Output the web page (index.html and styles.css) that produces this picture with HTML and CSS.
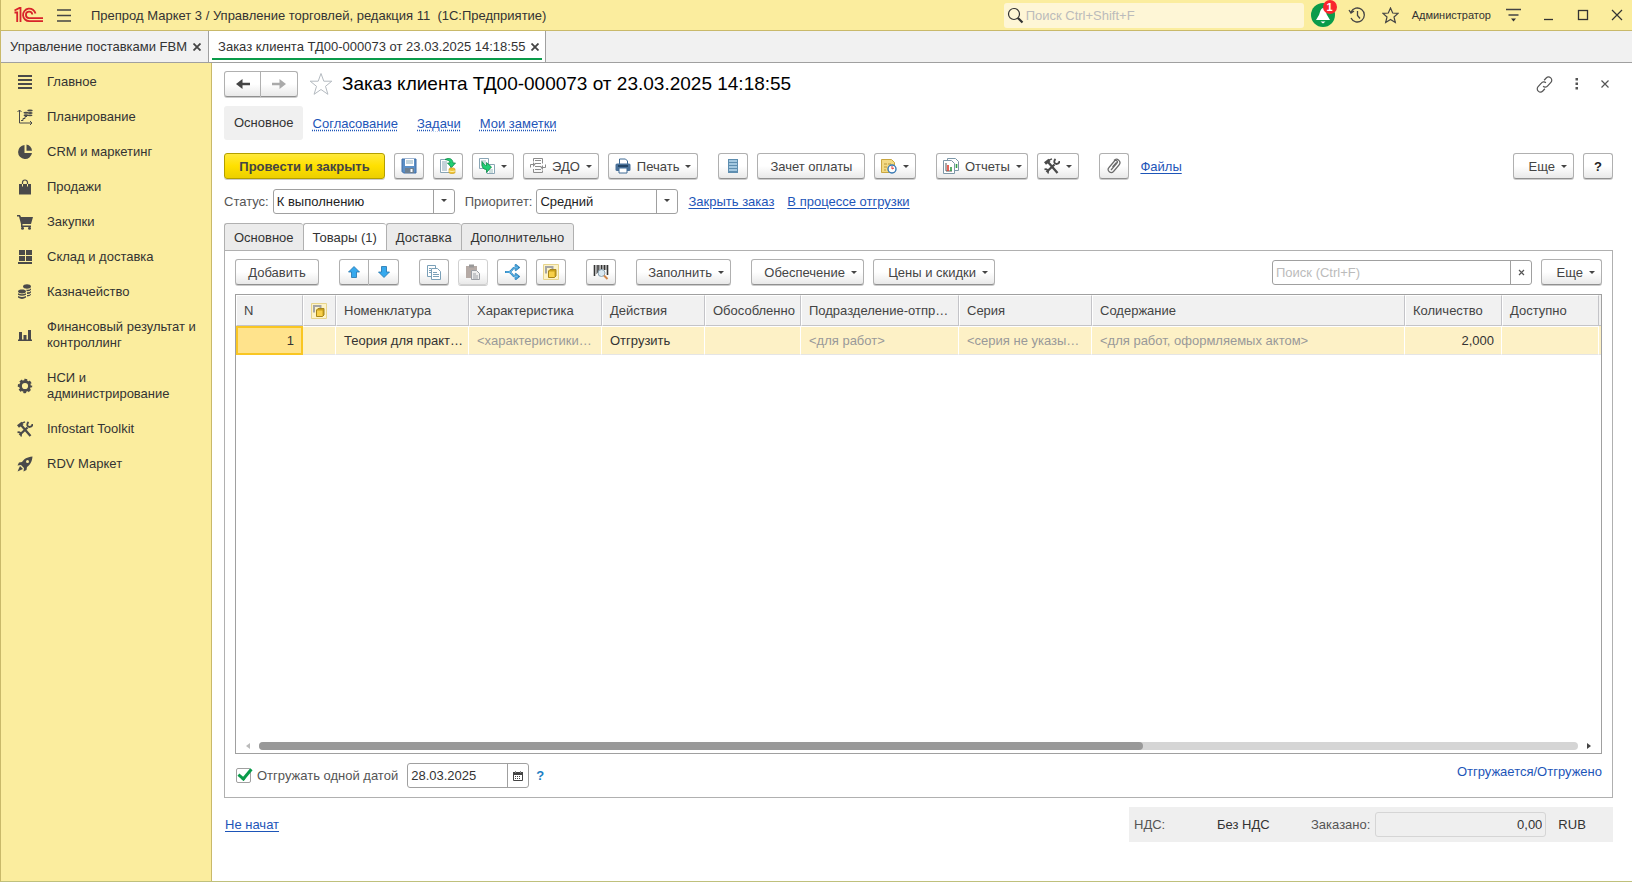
FILE: index.html
```html
<!DOCTYPE html>
<html lang="ru">

<head>
    <meta charset="UTF-8">
    <meta name="viewport" content="width=device-width, initial-scale=1.0">
    <title>Заказ клиента ТД00-000073</title>
    <link rel="stylesheet" href="styles.css">
</head>

<body>

    <header class="topbar">
        <svg class="logo" width="29" height="16" viewBox="0 0 29 16" fill="none" stroke="#d8232a" stroke-width="1.800">
            <path d="M.5 5.500H3.200V15M.5 3.500L5.500 1H6.500V15" />
            <path d="M21.500 6.500a6.300 6.300 0 1 0-6.200 7.700H29" />
            <path d="M18.300 7.500a3.200 3.200 0 1 0-3 3.600H29" />
        </svg>
        <button class="bare menu-button" aria-label="Меню">
            <svg width="14" height="14" viewBox="0 0 14 14" stroke="#444" stroke-width="1.300"><path d="M0 2h14M0 7.500h14M0 13h14" /></svg>
        </button>
        <span class="app-title">Препрод Маркет 3 / Управление торговлей, редакция 11&nbsp; (1С:Предприятие)</span>
        <label class="global-search">
            <svg width="17" height="17" viewBox="0 0 17 17" fill="none" stroke="#333"><circle cx="7" cy="7" r="5.500" stroke-width="1.200" /><path d="M11 11l4.500 4.500" stroke-width="2.200" /></svg>
            <input type="text" placeholder="Поиск Ctrl+Shift+F">
        </label>
        <button class="bare bell" aria-label="Оповещения">
            <svg width="24" height="24" viewBox="0 0 24 24"><circle cx="12" cy="12" r="12" fill="#0a9b4a" /><path d="M12 5c-3 1-3 5-4 7l-3 5h14l-3-5c-1-2-1-6-4-7zM9.500 18.500h5l-2.500 2z" fill="#fff" /></svg>
            <span class="badge">1</span>
        </button>
        <button class="bare history" aria-label="История">
            <svg width="18" height="18" viewBox="0 0 18 18" fill="none" stroke="#444" stroke-width="1.300"><path d="M3 6a7 7 0 1 1 0 6M1 4l2 3 3-2M9.500 5v4.500l2.500 3" /></svg>
        </button>
        <button class="bare favorites" aria-label="Избранное">
            <svg width="17" height="17" viewBox="0 0 17 17" fill="none" stroke="#444" stroke-width="1.200"><path d="M8.500 1l2.200 5 5.300.4-4 3.600 1.300 5.500-4.800-3-4.800 3L5 10 1 6.400l5.300-.4z" /></svg>
        </button>
        <span class="user">Администратор</span>
        <button class="bare service" aria-label="Сервис">
            <svg width="15" height="14" viewBox="0 0 15 14" fill="none" stroke="#444" stroke-width="1.300"><path d="M0 1.500h15M2.500 7h10" /><path d="M5 10.500h5l-2.500 3z" fill="#333" stroke="none" /></svg>
        </button>
        <button class="bare win" aria-label="Свернуть">
            <svg width="12" height="12" viewBox="0 0 12 12" stroke="#333"><path d="M1 10.500h9" stroke-width="1.300" /></svg>
        </button>
        <button class="bare win" aria-label="Развернуть">
            <svg width="12" height="12" viewBox="0 0 12 12" fill="none" stroke="#333"><rect x="1.500" y="1.500" width="9" height="9" stroke-width="1.300" /></svg>
        </button>
        <button class="bare win" aria-label="Закрыть">
            <svg width="12" height="12" viewBox="0 0 12 12" stroke="#333"><path d="M1 1l10 10M11 1L1 11" stroke-width="1.200" /></svg>
        </button>
    </header>

    <nav class="window-tabs">
        <div class="window-tab">Управление поставками FBM <button class="bare close" aria-label="Закрыть вкладку"><svg width="8" height="8" viewBox="0 0 8 8" stroke="#444" stroke-width="1.800"><path d="M.5 .5l7 7M7.500 .5l-7 7" /></svg></button></div>
        <div class="window-tab active">Заказ клиента ТД00-000073 от 23.03.2025 14:18:55 <button class="bare close" aria-label="Закрыть вкладку"><svg width="8" height="8" viewBox="0 0 8 8" stroke="#444" stroke-width="1.800"><path d="M.5 .5l7 7M7.500 .5l-7 7" /></svg></button></div>
    </nav>

    <div class="workspace">
        <nav class="sidebar">
            <a href="#"><svg width="16" height="16" viewBox="0 0 16 16" fill="#4a4a4a"><path d="M1 1h14v2H1zM1 5h14v2H1zM1 9h14v2H1zM1 13h14v2H1z" /></svg>Главное</a>
            <a href="#"><svg width="16" height="16" viewBox="0 0 16 16" fill="none" stroke="#4a4a4a"><path d="M2.500 1v13H15M.5 3l2-2 2 2M13 12l2 2-2 2M4 11.500h2v-2h2v-2h2" /><g fill="#4a4a4a" stroke="none"><ellipse cx="13" cy="1.500" rx="2.800" ry="1" /><ellipse cx="9" cy="3.800" rx="2.600" ry="1" /><ellipse cx="13.200" cy="4" rx="2.500" ry="1" /><ellipse cx="9" cy="6.200" rx="2.500" ry="1" /><ellipse cx="13" cy="6.300" rx="2.500" ry=".9" /></g></svg>Планирование</a>
            <a href="#"><svg width="16" height="16" viewBox="0 0 16 16" fill="#4a4a4a"><path d="M7.500 1A7 7 0 1 0 15 9H7.500z" /><path d="M9.500 0.500A7 7 0 0 1 15 6.800H9.500z" /></svg>CRM и маркетинг</a>
            <a href="#"><svg width="16" height="16" viewBox="0 0 16 16" fill="#4a4a4a"><path d="M2 5h12v10.500H2z" /><path d="M5.500 7.500V3.500a2.500 2.500 0 0 1 5 0v4" fill="none" stroke="#4a4a4a" stroke-width="1.200" /><path d="M5.500 5v2.500M10.500 5v2.500" stroke="#fbed9e" /></svg>Продажи</a>
            <a href="#"><svg width="16" height="16" viewBox="0 0 16 16" fill="#4a4a4a"><path d="M0 1h3l1 2h12l-2 7H5.500v1.500H14V13H4V10L2 2.500H0z" /><circle cx="5.500" cy="14.300" r="1.500" /><circle cx="12.500" cy="14.300" r="1.500" /></svg>Закупки</a>
            <a href="#"><svg width="16" height="16" viewBox="0 0 16 16" fill="#4a4a4a"><path d="M2 1h6v5H2zM9 1h6v5H9zM2 7h6v5H2zM9 7h6v5H9zM1 13h14v2H1z" /></svg>Склад и доставка</a>
            <a href="#"><svg width="16" height="16" viewBox="0 0 16 16" fill="#4a4a4a"><path d="M6 2.500c0-3 8-3 8 0s-8 3-8 0zM9 5.700q4 .4 5-1.500v1.500q-1 1.500-4 1.500zM10 8.200q3 .2 4-1.200v1.500q-1 1.500-4 1.500zM10 11q3 .2 4-1.200v1q-1 1.700-4 1.700zM1 7.500c0-2.600 8-2.600 8 0s-8 2.600-8 0zM1 9.200q4 2.200 8 0v1.500q-4 2.200-8 0zM1 12q4 2.200 8 0v1.500q-4 2.800-8 0z" /></svg>Казначейство</a>
            <a href="#"><svg width="16" height="16" viewBox="0 0 16 16" fill="#4a4a4a"><path d="M1 12.500h14V14H1zM2 5h3v8H2zM6.500 8h3v5h-3zM11 3h3v10h-3z" /></svg>Финансовый результат и контроллинг</a>
            <a href="#"><svg width="16" height="16" viewBox="0 0 16 16" fill="none" stroke="#4a4a4a"><circle cx="8" cy="8" r="4.500" stroke-width="2.800" /><circle cx="8" cy="8" r="6.200" stroke-width="2" stroke-dasharray="2.800 2.070" stroke-dashoffset="1.400" /></svg>НСИ и администрирование</a>
            <a href="#"><svg width="16" height="16" viewBox="0 0 16 16"><use href="#tools" /></svg>Infostart Toolkit</a>
            <a href="#"><svg width="16" height="16" viewBox="0 0 16 16" fill="#4a4a4a"><path d="M15.500.5C10 1 7 3 5 6L2 6.500.5 9.500 4 9l3 3-.5 3.500 3-1.500.5-3c3-2 5-5 5.500-10.500z" /><circle cx="10.500" cy="5.500" r="1.500" fill="#fbed9e" /><path d="M3 10l-2.500 5.500L6 13z" /></svg>RDV Маркет</a>
        </nav>

        <main class="form">
            <div class="title-row">
                <div class="button-group">
                    <button class="btn nav-btn" aria-label="Назад"><svg width="14" height="12" viewBox="0 0 14 12"><path d="M14 6H4" stroke="#444" stroke-width="2.500" /><path d="M0 6l6.500-5v10z" fill="#444" /></svg></button>
                    <button class="btn nav-btn" aria-label="Вперед"><svg width="14" height="12" viewBox="0 0 14 12"><path d="M0 6h10" stroke="#aaa" stroke-width="2.500" /><path d="M14 6L7.500 1v10z" fill="#aaa" /></svg></button>
                </div>
                <svg class="title-star" width="24" height="24" viewBox="0 0 24 24" fill="none" stroke="#b4bac0"><path d="M12 1.500l2.800 7.700h8l-6.300 5.100 2.400 8L12 17.500l-6.900 4.800 2.400-8L1.200 9.200h8z" /></svg>
                <h1>Заказ клиента ТД00-000073 от 23.03.2025 14:18:55</h1>
                <div class="title-tools">
                    <button class="bare" aria-label="Ссылка"><svg width="17" height="17" viewBox="0 0 24 24" fill="none" stroke="#555" stroke-width="1.700"><path d="M10 14.500a4.500 4.500 0 0 0 6.500-.5l4.500-5a4.500 4.500 0 0 0-6.600-6.200L11.500 6" /><path d="M14 9.500a4.500 4.500 0 0 0-6.500.5L3 15a4.500 4.500 0 0 0 6.600 6.200l2.900-3.200" /></svg></button>
                    <button class="bare" aria-label="Действия"><svg width="4" height="12" viewBox="0 0 4 12" fill="#555"><path d="M.5 0h2.500v2.500h-2.500zM.5 4.500h2.500v2.500h-2.500zM.5 9h2.500v2.500h-2.500z" /></svg></button>
                    <button class="bare" aria-label="Закрыть форму"><svg width="8" height="8" viewBox="0 0 8 8" stroke="#555" stroke-width="1.200"><path d="M.5 .5l7 7M7.500 .5l-7 7" /></svg></button>
                </div>
            </div>

            <nav class="form-nav">
                <span class="current">Основное</span>
                <a href="#">Согласование</a>
                <a href="#">Задачи</a>
                <a href="#">Мои заметки</a>
            </nav>

            <div class="toolbar">
                <button class="btn primary">Провести и закрыть</button>
                <button class="btn icon" aria-label="Записать"><svg width="16" height="16" viewBox="0 0 16 16"><path d="M1 1h14v14H2.500L1 13.500z" fill="#5b8fc7" stroke="#3f6da5" /><path d="M4 1h9v7H4z" fill="#fff" /><path d="M5 3h7M5 5h7" stroke="#8ab" /><path d="M4 10h9v5H4z" fill="#6d7f90" /><path d="M9.500 11h2v3h-2z" fill="#fff" /></svg></button>
                <button class="btn icon" aria-label="Провести"><svg width="16" height="16" viewBox="0 0 16 16"><path d="M.5 1.500h10v13H.5z" fill="#fff" stroke="#89a5b5" /><path d="M2 4h5M2 6h5M2 8h5M2 10h5M2 12h5" stroke="#89a5b5" /><path d="M5 1.500c4-2.500 8-.5 8 3.500h2.500L11.500 9.500 7.500 5H10c0-2-2-3-5-3.500z" fill="#1fce73" stroke="#0b8a45" stroke-width=".8" /><path d="M9 11c0-1.500 6-1.500 6 0v3.500c0 1.500-6 1.500-6 0z" fill="#edc135" stroke="#c99a10" stroke-width=".6" /><path d="M9 13q3 1 6 0" fill="none" stroke="#fff2b0" /></svg></button>
                <button class="btn with-caret" aria-label="Создать на основании"><svg width="16" height="16" viewBox="0 0 16 16"><path d="M.5.500h9v10h-9z" fill="#fff" stroke="#89a5b5" /><path d="M2 3h5M2 5h5M2 7h3" stroke="#9bb" /><path d="M8 6.500h7.500v9H8z" fill="#fff" stroke="#89a5b5" /><path d="M10 12h4M10 14h4" stroke="#9bb" /><path d="M3 3.500v3.500c0 3 2 4.500 4.500 4.500v3l5-5.500-5-4.500v3C5.500 7.500 4.500 5.500 3 3.500z" fill="#1fce73" stroke="#0b8a45" stroke-width=".8" /></svg><span class="caret"></span></button>
                <button class="btn with-caret"><svg width="16" height="16" viewBox="0 0 16 16" fill="none" stroke="#8b8b8b"><path d="M3.500 3.500v-3h9v5M3.500 11v3.500h9v-2M5 2.500h6M5 5.500h6M5 8.500h6M5 11.500h6" /><path d="M.5 9.500v-3h4M15.500 6.500v3h-4" /><path d="M3 4v5L5.500 6.500zM13 7v5l-2.500-2.500z" fill="#8b8b8b" stroke="none" /></svg>ЭДО<span class="caret"></span></button>
                <button class="btn with-caret"><svg width="16" height="16" viewBox="0 0 16 16"><path d="M4.500 1h6l2 2v4h-8z" fill="#fff" stroke="#3e6a94" /><rect x=".5" y="5.500" width="15" height="7.500" rx="1.500" fill="#4a7199" /><path d="M3 8h10" stroke="#193757" stroke-width="1.500" /><path d="M4 10h8v5H4z" fill="#fff" stroke="#3e6a94" /></svg>Печать<span class="caret"></span></button>
                <button class="btn icon group" aria-label="Структура подчиненности"><svg width="10" height="14" viewBox="0 0 10 14"><path d="M0 0h10v14H0z" fill="#5e8eb0" /><path d="M1 2h8M1 5h8M1 8h8M1 11h8" stroke="#bcdcf0" stroke-width="1.600" /></svg></button>
                <button class="btn text payment">Зачет оплаты</button>
                <button class="btn with-caret" aria-label="Напоминание"><svg width="16" height="16" viewBox="0 0 16 16"><path d="M.5 1.500h10l3 3v10H.5z" fill="#f3da83" stroke="#c9a640" /><path d="M3 6h3M7 6h3M3 9h3M3 12h2" stroke="#b9963a" /><circle cx="11" cy="11" r="4" fill="#fff" stroke="#3678b5" stroke-width="1.400" /><path d="M11 8v3l2-1" fill="none" stroke="#e03a3a" /></svg><span class="caret"></span></button>
                <button class="btn with-caret reports group"><svg width="16" height="16" viewBox="0 0 16 16"><path d="M4.500.5h8l3 3v9h-11z" fill="#fff" stroke="#7d97a8" /><path d="M.5 2.500h8l3 3v10H.5z" fill="#fff" stroke="#7d97a8" /><path d="M3 5v8h6" fill="none" stroke="#555" /><path d="M5 7v6" stroke="#e23b2e" stroke-width="1.600" /><path d="M8 9v4M13.500 6v4" stroke="#31a046" stroke-width="1.600" /></svg>Отчеты<span class="caret"></span></button>
                <button class="btn with-caret" aria-label="Инструменты"><svg width="16" height="16" viewBox="0 0 16 16">
                    <g id="tools" fill="none" stroke="#4a4a4a"><path d="M4 4l9.500 11M10.500 6.500L2.500 14" stroke-width="2.300" /><path d="M1 5.500L5.500 2" stroke-width="3.200" /><path d="M5 2.200L8 .8" stroke-width="1.400" /><path d="M11.500 1c-2 2-1.500 5 1 5 2 0 3-1 3-3" stroke-width="1.800" /><path d="M.5 11.500c2-1 4.500.5 3.500 4" stroke-width="1.600" /></g>
                </svg><span class="caret"></span></button>
                <button class="btn icon group" aria-label="Вложения"><svg width="14" height="16" viewBox="0 0 14 16" fill="none" stroke="#6a6a6a" stroke-width="1.200"><path d="M4 12l6-7a1.600 1.600 0 0 0-2.500-2L2 9.500a3 3 0 0 0 4.500 4L12 7a3.300 3.300 0 0 0-5-4.500M5.500 9l4-4.500" /></svg></button>
                <a href="#" class="files">Файлы</a>
                <button class="btn with-caret text more push">Еще<span class="caret"></span></button>
                <button class="btn icon help">?</button>
            </div>

            <div class="fields">
                <label for="status">Статус:</label>
                <span class="combo status"><select id="status"><option>К выполнению</option></select></span>
                <label for="priority">Приоритет:</label>
                <span class="combo priority"><select id="priority"><option>Средний</option></select></span>
                <a href="#">Закрыть заказ</a>
                <a href="#">В процессе отгрузки</a>
            </div>

            <div class="page-tabs">
                <button>Основное</button>
                <button class="active">Товары (1)</button>
                <button>Доставка</button>
                <button>Дополнительно</button>
            </div>

            <section class="panel">
                <div class="toolbar">
                    <button class="btn text add">Добавить</button>
                    <div class="button-group group">
                        <button class="btn icon" aria-label="Вверх"><svg width="12" height="12" viewBox="0 0 12 12"><path d="M6 .5L11.500 6H8.500v5.500h-5V6H.5z" fill="#36a9ee" stroke="#2173ad" stroke-width=".8" /></svg></button>
                        <button class="btn icon" aria-label="Вниз"><svg width="12" height="12" viewBox="0 0 12 12"><path d="M6 11.500L.5 6h3V.5h5V6h3z" fill="#36a9ee" stroke="#2173ad" stroke-width=".8" /></svg></button>
                    </div>
                    <button class="btn icon group" aria-label="Скопировать"><svg width="16" height="16" viewBox="0 0 16 16" fill="#fff" stroke="#7aa0b8"><path d="M1.500 1.500h8v11h-8z" /><path d="M5.500 4.500h6l3 3v8h-9z" /><path d="M7 8.500h4M7 10.500h6M7 12.500h6M3 4.500h2M3 6.500h2M3 8.500h2" /></svg></button>
                    <button class="btn icon" disabled aria-label="Вставить"><svg width="16" height="16" viewBox="0 0 16 16"><path d="M1 2h11v12H1z" fill="#b5aaa5" /><path d="M4 .5h5v3H4z" fill="#999" /><path d="M6.500 6.500h5l3 3v6h-8z" fill="#eee" stroke="#9b9fa5" /><path d="M8 10h3M8 12h5M8 14h5" stroke="#9b9fa5" /></svg></button>
                    <button class="btn icon" aria-label="Разбить строку"><svg width="16" height="16" viewBox="0 0 16 16" fill="none"><path d="M1 8h4M5 8c3 0 3-4.500 6-4.500h3M5 8c3 0 3 4.500 6 4.500h3M11 .5l3.500 3L11 6.500M11 9.500l3.500 3-3.500 3" stroke="#2b7fb8" stroke-width="2.200" /><path d="M1.500 8H5c3 0 3-4.500 6-4.500h2.500M5 8c3 0 3 4.500 6 4.500h2.500M11.300 1l2.800 2.500-2.800 2.500M11.300 10l2.800 2.500-2.800 2.500" stroke="#62bdf0" /></svg></button>
                    <button class="btn icon" aria-label="Обособить"><svg width="16" height="16" viewBox="0 0 16 16">
                        <g id="reserve"><path d="M.5.500h15v15H.5z" fill="#fdf3c8" stroke="#e7d48c" /><path d="M3 9.500V3H9.500v2.500" fill="none" stroke="#a5a5a5" stroke-width="2" /><path d="M5.500 7l1.500-1.500h6v6.500l-1.500 1.500h-6z" fill="#c99f1a" stroke="#a8861a" /><path d="M6 7.500h5.500v5.500H6z" fill="#f8d04a" /></g>
                    </svg></button>
                    <button class="btn icon group" aria-label="Штрихкод"><svg width="16" height="16" viewBox="0 0 16 16"><path d="M1.500 1v11M5 1v8M8.500 1v5M11.500 1v5M14.500 1v10" stroke="#333" stroke-width="1.600" /><path d="M3.300 1v9M6.700 1v6M10 1v4M13 1v5" stroke="#555" stroke-width=".7" /><circle cx="8.500" cy="9" r="3.500" fill="#d6e6f0" fill-opacity=".9" stroke="#8aa1b0" /><path d="M11 11.500l3.500 3.500" stroke="#d1874b" stroke-width="2" /></svg></button>
                    <button class="btn with-caret text fill group">Заполнить<span class="caret"></span></button>
                    <button class="btn with-caret text supply group">Обеспечение<span class="caret"></span></button>
                    <button class="btn with-caret text prices">Цены и скидки<span class="caret"></span></button>
                    <div class="field list-search">
                        <input type="text" placeholder="Поиск (Ctrl+F)" aria-label="Поиск">
                        <button aria-label="Очистить"><svg width="7" height="7" viewBox="0 0 7 7" stroke="#555" stroke-width="1.200"><path d="M1 1l5 5M6 1L1 6" /></svg></button>
                    </div>
                    <button class="btn with-caret text more">Еще<span class="caret"></span></button>
                </div>

                <div class="grid">
                    <table>
                        <colgroup>
                            <col class="c-num"><col class="c-flag"><col class="c-name"><col class="c-name"><col class="c-action"><col class="c-reserve"><col class="c-dept"><col class="c-name"><col><col class="c-qty"><col class="c-qty"><col class="c-end">
                        </colgroup>
                        <thead>
                            <tr>
                                <th>N</th>
                                <th><svg width="16" height="16" viewBox="0 0 16 16"><use href="#reserve" /></svg></th>
                                <th>Номенклатура</th>
                                <th>Характеристика</th>
                                <th>Действия</th>
                                <th>Обособленно</th>
                                <th>Подразделение-отпр…</th>
                                <th>Серия</th>
                                <th>Содержание</th>
                                <th>Количество</th>
                                <th>Доступно</th>
                                <th></th>
                            </tr>
                        </thead>
                        <tbody>
                            <tr>
                                <td class="number selected">1</td>
                                <td></td>
                                <td>Теория для практ…</td>
                                <td class="muted">&lt;характеристики…</td>
                                <td>Отгрузить</td>
                                <td></td>
                                <td class="muted">&lt;для работ&gt;</td>
                                <td class="muted">&lt;серия не указы…</td>
                                <td class="muted">&lt;для работ, оформляемых актом&gt;</td>
                                <td class="number">2,000</td>
                                <td></td>
                                <td></td>
                            </tr>
                        </tbody>
                    </table>
                    <div class="scrollbar">
                        <svg width="4" height="6" viewBox="0 0 4 6" fill="#bbb"><path d="M4 0v6L0 3z" /></svg>
                        <div class="track"><div class="thumb"></div></div>
                        <svg width="4" height="6" viewBox="0 0 4 6" fill="#444"><path d="M0 0v6l4-3z" /></svg>
                    </div>
                </div>

                <div class="ship-row">
                    <input type="checkbox" id="oneDate" checked>
                    <label for="oneDate">Отгружать одной датой</label>
                    <div class="field date">
                        <input type="text" value="28.03.2025" aria-label="Дата отгрузки">
                        <button aria-label="Выбрать дату"><svg width="10" height="10" viewBox="0 0 10 10"><path d="M.5 1.500h9v8h-9z" fill="#fff" stroke="#444" /><path d="M0 1h10v3H0z" fill="#444" /><path d="M2.500 0v2M7.500 0v2" stroke="#888" /><path d="M2 5.500h6M2 7.500h6" stroke="#444" stroke-dasharray="1 1" /></svg></button>
                    </div>
                    <a href="#" class="hint">?</a>
                    <a href="#" class="shipped">Отгружается/Отгружено</a>
                </div>
            </section>

            <footer class="form-footer">
                <a href="#">Не начат</a>
                <div class="totals">
                    <span class="caption vat">НДС:</span>
                    <span class="vat-value">Без НДС</span>
                    <label class="caption" for="ordered">Заказано:</label>
                    <input type="text" id="ordered" value="0,00" readonly>
                    <span>RUB</span>
                </div>
            </footer>
        </main>
    </div>

</body>

</html>
```
FILE: styles.css
```css
* {
    box-sizing: border-box;
}

body {
    margin: 0;
    min-height: 100vh;
    display: flex;
    flex-direction: column;
    border-left: 1px solid #c9b96a;
    border-bottom: 1px solid #bfc07c;
    font-family: "Liberation Sans", Arial, sans-serif;
    font-size: 13px;
    color: #333;
    background: #fff;
}

button,
input,
select {
    font: inherit;
    color: inherit;
}

svg {
    display: block;
    flex: none;
}

a {
    color: #1d55b8;
    text-underline-offset: 2px;
}

.bare {
    padding: 0;
    border: 0;
    background: none;
    display: flex;
    align-items: center;
    justify-content: center;
}

/* window header */
.topbar {
    display: flex;
    align-items: center;
    height: 31px;
    padding: 0 9px 0 13px;
    background: #fbed9e;
    border-bottom: 1px solid #c9b96a;
}

.menu-button {
    margin: 0 20px 0 14px;
}

.global-search {
    display: flex;
    align-items: center;
    width: 300px;
    height: 25px;
    margin-left: auto;
    padding-left: 3px;
    border-radius: 3px;
    background: #fef6d6;
}

.global-search input {
    flex: 1;
    min-width: 0;
    border: 0;
    background: none;
}

::placeholder {
    color: #bbb;
}

.bell {
    position: relative;
    margin-left: 7px;
}

.badge {
    position: absolute;
    top: -3px;
    right: -2px;
    width: 14px;
    height: 14px;
    border-radius: 50%;
    background: #f9262d;
    color: #fff;
    font-size: 11px;
    font-weight: bold;
    line-height: 14px;
    text-align: center;
}

.history {
    margin-left: 13px;
}

.favorites {
    margin: 0 13px 0 16px;
}

.user {
    font-size: 11px;
}

.service {
    margin-left: 15px;
}

.win {
    margin-left: 22px;
}

/* opened windows */
.window-tabs {
    display: flex;
    height: 32px;
    background: #f1f1f1;
    border-bottom: 1px solid #a0a0a0;
}

.window-tab {
    display: flex;
    align-items: center;
    gap: 6px;
    padding: 0 7px 0 9px;
    border-right: 1px solid #a0a0a0;
    white-space: nowrap;
}

.window-tab.active {
    padding-right: 6px;
    background: linear-gradient(#0a9b4a, #0a9b4a) center 27px / calc(100% - 6px) 2px no-repeat #fff;
}

.workspace {
    flex: 1;
    display: flex;
}

.sidebar {
    flex: none;
    width: 211px;
    padding-top: 1px;
    background: #fbed9e;
    border-right: 1px solid #c9b96a;
}

.sidebar a {
    display: flex;
    align-items: center;
    gap: 14px;
    min-height: 35px;
    padding: 10px 14px 9px 16px;
    line-height: 16px;
    color: #333;
    text-decoration: none;
}

/* document form */
.form {
    flex: 1;
    min-width: 0;
    display: flex;
    flex-direction: column;
    padding: 8px 19px 39px 12px;
}

.title-row {
    display: flex;
    align-items: center;
}

.title-star {
    margin: 0 9px 0 11px;
}

h1 {
    margin: 0;
    font-size: 19px;
    font-weight: normal;
    line-height: 24px;
    color: #000;
}

.title-tools {
    display: flex;
    align-items: center;
    gap: 22px;
    margin-left: auto;
    padding-right: 4px;
}

.form-nav {
    display: flex;
    align-items: center;
    gap: 19px;
    margin: 9px 0 13px;
}

.form-nav .current {
    margin-right: -9px;
    padding: 0 9px 0 10px;
    line-height: 34px;
    border-radius: 3px;
    background: #f0f0f0;
}

.form-nav a {
    text-decoration-style: dotted;
}

.toolbar {
    display: flex;
    align-items: center;
    gap: 9px;
}

.btn {
    display: flex;
    align-items: center;
    justify-content: center;
    flex: none;
    height: 26px;
    padding: 0;
    border: 1px solid #b0b0b0;
    border-bottom-color: #909090;
    border-radius: 3px;
    background: linear-gradient(#fff 50%, #e9e9e9);
    box-shadow: 0 1px 0 #ccc;
    color: #444;
    white-space: nowrap;
}

.btn:disabled {
    border-color: #d0d0d0;
}

.icon {
    width: 30px;
}

.with-caret {
    gap: 6px;
    padding: 0 6px;
}

.with-caret.text {
    justify-content: flex-end;
}

.caret {
    border: 3px solid transparent;
    border-top-color: #444;
    border-bottom-width: 0;
}

.primary {
    width: 161px;
    border-color: #b39f00;
    background: linear-gradient(#ffe93c, #ffe000 50%, #eccf00);
    font-weight: bold;
}

.payment {
    width: 108px;
}

.reports {
    width: 92px;
}

.add {
    width: 84px;
}

.fill {
    width: 95px;
}

.supply {
    width: 113px;
}

.prices {
    width: 122px;
}

.more {
    width: 61px;
}

.group {
    margin-left: 11px;
}

.button-group {
    display: flex;
}

.button-group .btn:first-child {
    border-radius: 3px 0 0 3px;
}

.button-group .btn:last-child {
    border-left: 0;
    border-radius: 0 3px 3px 0;
}

.nav-btn {
    width: 37px;
}

.push {
    margin-left: auto;
}

.help {
    font-weight: bold;
    color: #222;
}

.files {
    margin-left: 2px;
}

.fields {
    display: flex;
    align-items: center;
    gap: 10px;
    margin: 10px 0 9px;
    color: #555;
}

.fields label + .combo {
    margin-left: -6px;
}

.fields a + a {
    margin-left: 3px;
}

.combo {
    position: relative;
    display: flex;
    height: 25px;
}

.combo select {
    width: 100%;
    padding: 0 26px 0 3px;
    border: 1px solid #a0a0a0;
    border-radius: 3px;
    background: #fff;
    appearance: none;
    color: #222;
}

/* drop-down part of the combo box */
.combo::before {
    content: "";
    position: absolute;
    top: 1px;
    right: 21px;
    bottom: 1px;
    border-left: 1px solid #a0a0a0;
}

.combo::after {
    content: "";
    position: absolute;
    top: 10px;
    right: 8px;
    border: 3px solid transparent;
    border-top-color: #444;
    border-bottom-width: 0;
}

.status {
    width: 182px;
}

.priority {
    width: 142px;
}

.page-tabs {
    display: flex;
    margin-bottom: -1px;
}

.page-tabs button {
    height: 28px;
    padding: 0 9px;
    border: 1px solid #b0b0b0;
    border-right-width: 0;
    border-radius: 3px 3px 0 0;
    background: #ebebeb;
}

.page-tabs button:last-child {
    border-right-width: 1px;
}

.page-tabs .active {
    border-bottom-color: #fff;
    background: #fff;
}

.panel {
    flex: 1;
    display: flex;
    flex-direction: column;
    padding: 8px 10px 9px;
    border: 1px solid #b0b0b0;
}

.field {
    display: flex;
    height: 25px;
    border: 1px solid #a0a0a0;
    border-radius: 3px;
    background: #fff;
}

.field input {
    flex: 1;
    min-width: 0;
    padding: 0 3px;
    border: 0;
    background: none;
}

.field button {
    display: flex;
    align-items: center;
    justify-content: center;
    width: 21px;
    padding: 0;
    border: 0;
    border-left: 1px solid #a0a0a0;
    background: none;
}

.list-search {
    width: 260px;
    margin-left: auto;
}

.grid {
    flex: 1;
    display: flex;
    flex-direction: column;
    justify-content: space-between;
    margin-top: 9px;
    border: 1px solid #a0a0a0;
}

table {
    width: 100%;
    table-layout: fixed;
    border-collapse: separate;
    border-spacing: 0;
}

th,
td {
    padding: 0 2px 0 7px;
    border: 1px solid #fff;
    font-weight: normal;
    text-align: left;
    white-space: nowrap;
    overflow: hidden;
    text-overflow: ellipsis;
}

th {
    height: 31px;
    border-right-color: #c4c4c8;
    border-bottom-color: #c4c4c8;
    background: #f1f1f1;
    color: #444;
}

td {
    height: 29px;
    border-width: 1px 1px 1px 0;
    padding-left: 8px;
    border-bottom-color: #e5e5e5;
    background: #fdf1c6;
}

.number {
    padding-right: 7px;
    text-align: right;
}

.selected {
    border: 2px solid #f9c623;
    background: #ffe38c;
}

.muted {
    color: #999;
}

.c-num { width: 67px; }
.c-flag { width: 33px; }
.c-name { width: 133px; }
.c-action { width: 103px; }
.c-reserve { width: 96px; }
.c-dept { width: 158px; }
.c-qty { width: 97px; }
.c-end { width: 2px; }

th:last-child,
td:last-child {
    padding: 0;
    border-width: 0 0 1px;
}

.scrollbar {
    display: flex;
    align-items: center;
    gap: 9px;
    padding: 0 10px 3px;
}

.track {
    flex: 1;
    height: 8px;
    border-radius: 4px;
    background: #d5d5d5;
}

.thumb {
    width: 67%;
    height: 8px;
    border-radius: 4px;
    background: #999;
}

.ship-row {
    display: flex;
    align-items: center;
    margin-top: 9px;
}

.ship-row label {
    margin: 0 9px 0 6px;
    color: #555;
}

input[type="checkbox"] {
    width: 15px;
    height: 15px;
    margin: 0 0 0 1px;
    border: 1px solid #a0a0a0;
    border-radius: 2px;
    appearance: none;
    position: relative;
}

input[type="checkbox"]:checked::after {
    content: "";
    position: absolute;
    left: 4px;
    top: -3px;
    width: 5px;
    height: 11px;
    border: solid #0a9b4a;
    border-width: 0 3px 3px 0;
    transform: rotate(40deg);
}

.date {
    width: 122px;
}

.hint {
    margin-left: 7px;
    font-weight: bold;
    color: #1a80c4;
    text-decoration: none;
}

.shipped {
    margin-left: auto;
    padding-bottom: 8px;
    text-decoration: none;
}

.form-footer {
    display: flex;
    align-items: center;
    justify-content: space-between;
    margin-top: 9px;
    padding-left: 1px;
}

.totals {
    display: flex;
    align-items: center;
    width: 484px;
    height: 35px;
    padding: 0 5px;
    background: #efefef;
}

.caption {
    color: #555;
}

.vat {
    width: 83px;
}

.vat-value {
    width: 94px;
}

.totals input {
    width: 171px;
    height: 25px;
    margin: 0 12px 0 5px;
    padding: 0 3px;
    border: 1px solid #d5d5d5;
    border-radius: 3px;
    background: none;
    text-align: right;
}
```
